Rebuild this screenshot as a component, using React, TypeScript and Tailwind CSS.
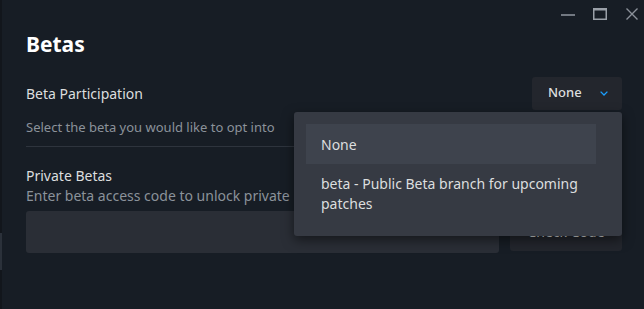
import React from "react";

export default function App() {
  return (
    <div
      className="relative flex h-[309px] w-[644px] overflow-hidden bg-[#171d25] text-[#dcdedf]"
      style={{ fontFamily: '"Noto Sans", "Open Sans", sans-serif' }}
    >
      {/* left edge strip */}
      <div className="flex w-[2px] flex-col bg-[#12161c]">
        <div className="h-[233px]" />
        <div className="h-[37px] bg-[#2b313a]" />
      </div>

      <div className="flex flex-1 flex-col pl-[24px] pr-[22px]">
        {/* window controls */}
        <div className="-mr-[22px] flex h-[30px] items-start justify-end gap-0 pr-[6px] pt-[8px]">
          <svg width="14" height="12" viewBox="0 0 14 12" className="mr-[18px]">
            <line x1="0" y1="7" x2="14" y2="7" stroke="#8a9099" strokeWidth="1.6" />
          </svg>
          <svg width="14" height="12" viewBox="0 0 14 12" className="mr-[19px]">
            <rect x="0.75" y="0.75" width="12.5" height="10.5" fill="none" stroke="#9aa0a8" strokeWidth="1.5" />
            <line x1="0.75" y1="1.5" x2="13.25" y2="1.5" stroke="#9aa0a8" strokeWidth="2" />
          </svg>
          <svg width="12" height="12" viewBox="0 0 12 12">
            <path d="M0.5 0.5 L11.5 11.5 M11.5 0.5 L0.5 11.5" stroke="#8a9099" strokeWidth="1.4" />
          </svg>
        </div>

        <div className="h-[28px] text-[21px] font-bold leading-[28px] text-white">Betas</div>

        <div className="mt-[18px] flex h-[34px] items-center justify-between">
          <div className="text-[14px] text-[#dcdedf]">Beta Participation</div>
          <div className="flex h-[33px] w-[90px] items-center rounded-[3px] bg-[#23262d] pl-[16px] text-[13px] font-medium text-[#dcdedf]">
            <span>None</span>
            <svg width="8" height="5" viewBox="0 0 8 5" className="ml-[18px] mt-[1px]">
              <path d="M0.6 0.6 L4 4 L7.4 0.6" fill="none" stroke="#1a9fff" strokeWidth="1.3" />
            </svg>
          </div>
        </div>

        <div className="mt-[8px] text-[13px] leading-[18px] text-[#8b929a]">
          Select the beta you would like to opt into
        </div>
        <div className="mt-[10px] h-px bg-[#2e343d]" />

        <div className="mt-[19px] text-[14px] leading-[20px] text-[#dcdedf]">Private Betas</div>
        <div className="text-[14px] leading-[20px] text-[#8b929a]">
          Enter beta access code to unlock private betas
        </div>
        <div className="mt-[5px] flex gap-[11px]">
          <div className="h-[42px] flex-1 rounded-[3px] bg-[#2a2e36]" />
          <div className="flex h-[40px] w-[112px] items-center justify-center rounded-[3px] bg-[#23262d] text-[14px] text-[#dcdedf]">
            Check Code
          </div>
        </div>
      </div>

      {/* dropdown menu */}
      <div className="absolute left-[294px] top-[112px] w-[328px] rounded-[3px] bg-[#363a43] pb-[12px] pl-[12px] pr-[26px] pt-[12px] text-[14px] text-[#dcdedf] shadow-[0_4px_12px_rgba(0,0,0,0.5)]">
        <div className="flex h-[40px] items-center bg-[#3e434d] px-[15px]">None</div>
        <div className="px-[15px] py-[10px] leading-[20px]">
          beta - Public Beta branch for upcoming patches
        </div>
      </div>
    </div>
  );
}
